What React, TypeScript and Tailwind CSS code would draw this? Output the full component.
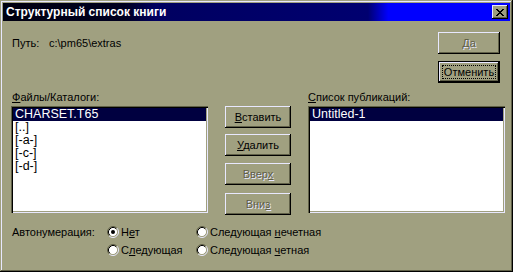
import type { ReactNode } from 'react';

const font = "font-['Liberation_Sans',Arial,sans-serif]";

function Btn({
  children,
  disabled,
  isDefault,
  className = '',
}: {
  children: ReactNode;
  disabled?: boolean;
  isDefault?: boolean;
  className?: string;
}) {
  const bevel = isDefault
    ? 'border border-black shadow-[inset_-1px_-1px_0_#000,inset_1px_1px_0_#e8e8ff,inset_-2px_-2px_0_#606048]'
    : 'shadow-[inset_-1px_-1px_0_#000,inset_1px_1px_0_#e8e8ff,inset_-2px_-2px_0_#606048]';
  return (
    <div
      className={`relative flex h-[22px] items-center justify-center bg-[#a0a080] text-[11px] leading-[13px] ${bevel} ${
        disabled ? 'text-[#606048] [text-shadow:1px_1px_0_#e8e8ff]' : 'text-black'
      } ${className}`}
    >
      {isDefault && (
        <span className="absolute inset-[3px] border border-dotted border-black" />
      )}
      <span className="relative">{children}</span>
    </div>
  );
}

function Radio({ checked, children }: { checked?: boolean; children: ReactNode }) {
  return (
    <div className="flex items-center gap-[2px]">
      <svg width="12" height="12" viewBox="0 0 12 12">
        <circle cx="6" cy="6" r="4.5" fill="#fff" />
        <path d="M2.11 9.89 A5.5 5.5 0 0 1 9.89 2.11" fill="none" stroke="#606048" />
        <path d="M9.89 2.11 A5.5 5.5 0 0 1 2.11 9.89" fill="none" stroke="#e8e8ff" />
        <path d="M2.82 9.18 A4.5 4.5 0 0 1 9.18 2.82" fill="none" stroke="#000" />
        <path d="M9.18 2.82 A4.5 4.5 0 0 1 2.82 9.18" fill="none" stroke="#a0a080" />
        {checked && <circle cx="6" cy="6" r="2" fill="#000" />}
      </svg>
      <span className="text-[11px] leading-[13px]">{children}</span>
    </div>
  );
}

function ListBox({ items }: { items: string[] }) {
  return (
    <div className="h-[107px] w-[197px] bg-white p-[2px] shadow-[inset_1px_1px_0_#606048,inset_2px_2px_0_#000,inset_-1px_-1px_0_#e8e8ff,inset_-2px_-2px_0_#a0a080]">
      {items.map((it, i) => (
        <div
          key={it}
          className={`h-[13px] pl-[2px] text-[12.5px] leading-[13px] ${
            i === 0 ? 'bg-[#000040] text-white' : 'text-black'
          }`}
        >
          {it}
        </div>
      ))}
    </div>
  );
}

const CloseGlyph = () => (
  <svg width="8" height="7" viewBox="0 0 8 7" shapeRendering="crispEdges">
    <path
      d="M0 0h2v1H0zM6 0h2v1H6zM1 1h2v1H1zM5 1h2v1H5zM2 2h4v1H2zM3 3h2v1H3zM2 4h4v1H2zM1 5h2v1H1zM5 5h2v1H5zM0 6h2v1H0zM6 6h2v1H6z"
      fill="#000"
    />
  </svg>
);

export default function App() {
  return (
    <div
      className={`${font} flex h-[272px] w-[513px] flex-col bg-[#a0a080] p-[3px] text-black shadow-[inset_-1px_-1px_0_#000,inset_1px_1px_0_#a0a080,inset_-2px_-2px_0_#606048,inset_2px_2px_0_#e8e8ff]`}
    >
      {/* title bar */}
      <div className="flex h-[18px] items-center justify-between bg-[linear-gradient(to_right,#000010_0%,#000020_24%,#000060_30%,#000070_72%,#0000ff_76%,#0000ff_100%)] pl-[3px] pr-[2px]">
        <span className="text-[12px] font-bold leading-[14px] text-white">Структурный список книги</span>
        <div className="flex h-[14px] w-[16px] items-center justify-center bg-[#a0a080] shadow-[inset_-1px_-1px_0_#000,inset_1px_1px_0_#e8e8ff,inset_-2px_-2px_0_#606048]">
          <CloseGlyph />
        </div>
      </div>

      <div className="flex flex-col pl-[8px] pr-[5px]">
        {/* path + OK/Cancel */}
        <div className="mt-[11px] flex justify-between">
          <div className="mt-[5px] flex pl-[1px] text-[11px] leading-[13px]">
            <span className="w-[37px]">Путь:</span>
            <span>c:\pm65\extras</span>
          </div>
          <div className="mr-[5px] flex w-[62px] flex-col gap-[7px]">
            <Btn disabled>
              <u>Д</u>а
            </Btn>
            <Btn isDefault>Отменить</Btn>
          </div>
        </div>

        {/* labels */}
        <div className="mt-[8px] flex h-[13px] text-[11px] leading-[13px]">
          <span className="w-[297px] pl-[1px]">
            <u>Ф</u>айлы/Каталоги:
          </span>
          <span>
            <u>С</u>писок публикаций:
          </span>
        </div>

        {/* lists + buttons */}
        <div className="mt-[2px] flex h-[107px] items-start gap-[17px]">
          <ListBox items={['CHARSET.T65', '[..]', '[-a-]', '[-c-]', '[-d-]']} />
          <div className="flex w-[66px] flex-col">
            <Btn>
              <u>В</u>ставить
            </Btn>
            <Btn className="mt-[6px]">
              <u>У</u>далить
            </Btn>
            <Btn disabled className="mt-[7px]">
              Ввер<u>х</u>
            </Btn>
            <Btn disabled className="mt-[8px]">
              Вни<u>з</u>
            </Btn>
          </div>
          <ListBox items={['Untitled-1']} />
        </div>

        {/* auto numbering */}
        <div className="mt-[13px] flex flex-col gap-[6px] text-[11px] leading-[13px]">
          <div className="flex h-[12px] items-center">
            <span className="w-[96px] pl-[1px]">Автонумерация:</span>
            <div className="w-[89px]">
              <Radio checked>
                Н<u>е</u>т
              </Radio>
            </div>
            <Radio>
              Следующая <u>н</u>ечетная
            </Radio>
          </div>
          <div className="flex h-[12px] items-center">
            <span className="w-[96px]" />
            <div className="w-[89px]">
              <Radio>
                С<u>л</u>едующая
              </Radio>
            </div>
            <Radio>
              Следующая <u>ч</u>етная
            </Radio>
          </div>
        </div>
      </div>
    </div>
  );
}
